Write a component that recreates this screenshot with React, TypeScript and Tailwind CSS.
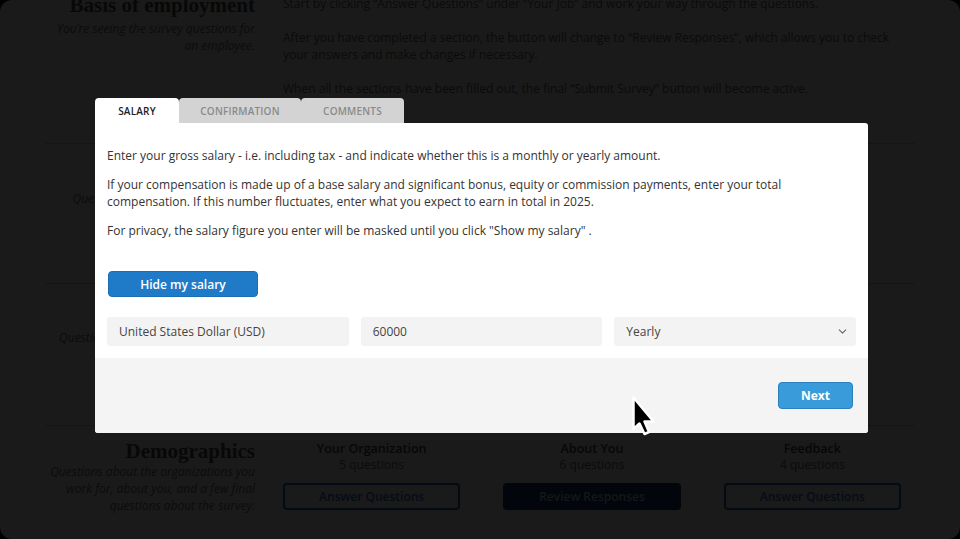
import { ChevronDown } from "lucide-react";

const sans = "font-['Open_Sans','Noto_Sans',sans-serif]";
const serif = "font-['Liberation_Serif','DejaVu_Serif',serif]";

type Column = {
  title: string;
  count: string;
  action: string;
  filled?: boolean;
};

const demographics: Column[] = [
  { title: "Your Organization", count: "5 questions", action: "Answer Questions" },
  { title: "About You", count: "6 questions", action: "Review Responses", filled: true },
  { title: "Feedback", count: "4 questions", action: "Answer Questions" },
];

// background page is drawn already dimmed, as it sits behind the modal backdrop
function SurveyColumns({ columns }: { columns: Column[] }) {
  return (
    <div className="grid w-[618px] grid-cols-3 gap-x-[43px]">
      {columns.map((col) => (
        <div key={col.title} className="flex flex-col items-center">
          <div className="text-[12.5px] font-semibold leading-[17px] text-[#070707]">
            {col.title}
          </div>
          <div className="text-[12px] leading-[16px] text-[#0b0b0b]">{col.count}</div>
          <div
            className={
              col.filled
                ? "mt-[10px] flex h-[27px] w-full items-center justify-center rounded-[4px] border-2 border-[#02060c] bg-[#02060c] text-[12px] font-semibold text-[#15171a]"
                : "mt-[10px] flex h-[27px] w-full items-center justify-center rounded-[4px] border-2 border-[#030a14] text-[12px] font-semibold text-[#040c18]"
            }
          >
            {col.action}
          </div>
        </div>
      ))}
    </div>
  );
}

function SurveyPage() {
  return (
    <div className={`ml-[45px] w-[870px] ${sans}`}>
      <section className="flex h-[143px] gap-[28px]">
        <div className="-mt-[8px] w-[210px] text-right">
          <h2 className={`${serif} text-[21px] font-bold leading-[26px] text-[#080808]`}>
            Basis of employment
          </h2>
          <p className="mt-[2px] text-[12px] italic leading-[17px] text-[#0c0c0c]">
            You’re seeing the survey questions for an employee.
          </p>
        </div>
        <div className="-mt-[5px] w-[632px] text-[12px] leading-[17px] text-[#0b0b0b]">
          <p className="mb-[17px]">
            Start by clicking “Answer Questions” under “Your Job” and work your way through the questions.
          </p>
          <p className="mb-[17px]">
            After you have completed a section, the button will change to “Review Responses”, which allows you to check your answers and make changes if necessary.
          </p>
          <p>When all the sections have been filled out, the final “Submit Survey” button will become active.</p>
        </div>
      </section>

      <section className="flex h-[140px] gap-[28px] border-t border-[#151515] pt-[22px]">
        <div className="w-[210px] text-right">
          <h2 className={`${serif} text-[21px] font-bold leading-[24px] text-[#080808]`}>Your Job</h2>
          <p className="text-[12px] italic leading-[17px] text-[#0c0c0c]">
            Questions about your current role, compensation and benefits.
          </p>
        </div>
      </section>

      <section className="flex h-[142px] gap-[28px] border-t border-[#151515] pt-[21px]">
        <div className="w-[210px] text-right">
          <h2 className={`${serif} text-[21px] font-bold leading-[24px] text-[#080808]`}>Working Hours</h2>
          <p className="text-[12px] italic leading-[17px] text-[#0c0c0c]">
            Questions about your working hours.
          </p>
        </div>
      </section>

      <section className="flex gap-[28px] border-t border-[#151515] pt-[13px]">
        <div className="w-[210px] text-right">
          <h2 className={`${serif} text-[21px] font-bold leading-[24px] text-[#080808]`}>Demographics</h2>
          <p className="text-[12px] italic leading-[17px] text-[#0c0c0c]">
            Questions about the organizations you work for, about you, and a few final questions about the survey.
          </p>
        </div>
        <div className="mt-[1px]">
          <SurveyColumns columns={demographics} />
        </div>
      </section>
    </div>
  );
}

function SalaryModal() {
  const tabs = ["Salary", "Confirmation", "Comments"];
  const tabWidths = ["w-[84px]", "w-[122px]", "w-[103px]"];

  return (
    <div className={`absolute left-[95px] top-[98px] w-[773px] ${sans}`}>
      <div className="flex">
        {tabs.map((tab, i) => (
          <div
            key={tab}
            className={
              i === 0
                ? `${tabWidths[i]} flex h-[25px] items-center justify-center rounded-t-[4px] bg-white pt-[1px] text-[10px] font-semibold uppercase tracking-[0.2px] text-[#222]`
                : `${tabWidths[i]} flex h-[25px] items-center justify-center rounded-t-[4px] bg-[#d3d3d3] pt-[1px] text-[10px] font-semibold uppercase tracking-[0.2px] text-[#8a8a8a]`
            }
          >
            {tab}
          </div>
        ))}
      </div>

      <div className="overflow-hidden rounded-b-[3px] rounded-tr-[3px] bg-white">
        <div className="px-[12px] pb-[12px] pt-[24px] text-[12px] leading-[17px] text-[#333]">
          <p className="mb-[12px]">
            Enter your gross salary - i.e. including tax - and indicate whether this is a monthly or yearly amount.
          </p>
          <p className="mb-[12px]">
            If your compensation is made up of a base salary and significant bonus, equity or commission payments, enter your total compensation. If this number fluctuates, enter what you expect to earn in total in 2025.
          </p>
          <p>For privacy, the salary figure you enter will be masked until you click "Show my salary" .</p>

          <button className="ml-[1px] mt-[32px] flex h-[26px] w-[150px] items-center justify-center rounded-[4px] border border-[#1a6fb5] bg-[#1f7bc8] text-[12px] font-semibold text-white">
            Hide my salary
          </button>

          <div className="mt-[20px] grid grid-cols-3 gap-[12px] text-[12px] text-[#444]">
            <div className="flex h-[29px] items-center rounded-[3px] bg-[#f3f3f3] px-[12px]">
              United States Dollar (USD)
            </div>
            <div className="flex h-[29px] items-center rounded-[3px] bg-[#f3f3f3] px-[12px]">60000</div>
            <div className="flex h-[29px] items-center justify-between rounded-[3px] bg-[#f3f3f3] pl-[12px] pr-[7px]">
              <span>Yearly</span>
              <ChevronDown size={13} strokeWidth={2} className="text-[#666]" />
            </div>
          </div>
        </div>

        <div className="flex h-[75px] items-center justify-end bg-[#f4f4f4] pr-[15px]">
          <button className="flex h-[27px] w-[75px] items-center justify-center rounded-[4px] border border-[#2b7fba] bg-[#3a9bdb] text-[12px] font-bold text-white">
            Next
          </button>
        </div>
      </div>
    </div>
  );
}

function Cursor() {
  return (
    <svg
      className="absolute left-[630px] top-[394px]"
      width="28"
      height="42"
      viewBox="0 0 28 42"
    >
      <path
        d="M3.5 3.5 L3.5 35 L9.5 29.5 L14.5 40 L19 38 L14.5 27.5 L23.5 27.5 Z"
        fill="#000"
        stroke="#fff"
        strokeWidth="2.5"
        strokeLinejoin="round"
      />
    </svg>
  );
}

export default function App() {
  return (
    <div className="h-[539px] w-[960px] overflow-hidden bg-black">
      <div className="relative h-full w-full overflow-hidden rounded-[12px] bg-[#1a1a1a]">
        <SurveyPage />
        <SalaryModal />
        <Cursor />
      </div>
    </div>
  );
}
